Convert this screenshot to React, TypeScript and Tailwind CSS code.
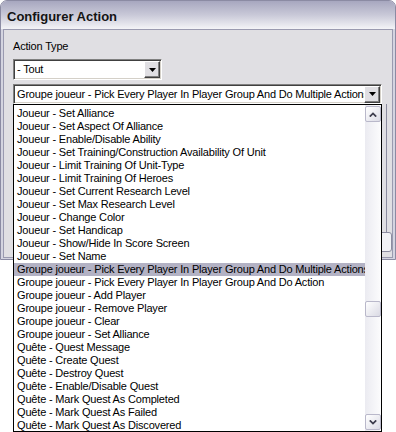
import React from "react";

const rows = [
  "Joueur - Set Alliance",
  "Joueur - Set Aspect Of Alliance",
  "Joueur - Enable/Disable Ability",
  "Joueur - Set Training/Construction Availability Of Unit",
  "Joueur - Limit Training Of Unit-Type",
  "Joueur - Limit Training Of Heroes",
  "Joueur - Set Current Research Level",
  "Joueur - Set Max Research Level",
  "Joueur - Change Color",
  "Joueur - Set Handicap",
  "Joueur - Show/Hide In Score Screen",
  "Joueur - Set Name",
  "Groupe joueur - Pick Every Player In Player Group And Do Multiple Actions",
  "Groupe joueur - Pick Every Player In Player Group And Do Action",
  "Groupe joueur - Add Player",
  "Groupe joueur - Remove Player",
  "Groupe joueur - Clear",
  "Groupe joueur - Set Alliance",
  "Quête - Quest Message",
  "Quête - Create Quest",
  "Quête - Destroy Quest",
  "Quête - Enable/Disable Quest",
  "Quête - Mark Quest As Completed",
  "Quête - Mark Quest As Failed",
  "Quête - Mark Quest As Discovered",
];

const SELECTED = 12;

function DropArrowButton() {
  return (
    <div className="w-[16px] h-[17px] shrink-0 flex items-center justify-center bg-[#e0dfe3] border border-t-white border-l-white border-r-[#404040] border-b-[#404040] shadow-[inset_-1px_-1px_0_#808080]">
      <svg width="7" height="4" viewBox="0 0 7 4">
        <polygon points="0,0 7,0 3.5,4" fill="#000" />
      </svg>
    </div>
  );
}

function Combo({ text, width, height }: { text: string; width: string; height: string }) {
  return (
    <div
      className={`${width} ${height} flex items-center bg-white border border-t-[#808080] border-l-[#808080] border-b-white border-r-white shadow-[inset_1px_1px_0_#404040,inset_-1px_-1px_0_#d4d0c8] pl-[3px] pr-[1px] py-[1px]`}
    >
      <div className="flex-1 overflow-hidden whitespace-nowrap text-[11px] leading-[13px] tracking-[-0.18px] text-black">
        {text}
      </div>
      <DropArrowButton />
    </div>
  );
}

function ScrollBtn({ up }: { up: boolean }) {
  return (
    <div className="w-[16px] h-[16px] shrink-0 rounded-[2px] border border-[#b9b8ca] bg-gradient-to-br from-white to-[#dcdce6] flex items-center justify-center">
      <svg width="8" height="5" viewBox="0 0 8 5">
        {up ? (
          <path d="M0.8 4.6 L4 1.4 L7.2 4.6" stroke="#3c3c4c" strokeWidth="1.8" fill="none" />
        ) : (
          <path d="M0.8 0.4 L4 3.6 L7.2 0.4" stroke="#3c3c4c" strokeWidth="1.8" fill="none" />
        )}
      </svg>
    </div>
  );
}

export default function App() {
  return (
    <div className="relative w-[396px] h-[432px] bg-white overflow-hidden font-['Liberation_Sans',Arial,sans-serif]">
      {/* Dialog window */}
      <div className="w-[396px] h-[260px] flex flex-col rounded-t-[7px] border border-[#8b8ba3] bg-[#d4d4e0]">
        <div className="h-[28px] shrink-0 rounded-t-[6px] bg-gradient-to-b from-[#a7a7bf] via-[#c9c9d8] to-[#f4f4f7] flex items-center pl-[6px] pt-[3px]">
          <span className="font-bold text-[13px] text-[#141414]">Configurer Action</span>
        </div>
        <div className="flex-1 mx-[2px] mb-[1px] border border-[#9a9ab0] bg-[#e0dfe3] flex flex-col pl-[9px]">
          <div className="mt-[10px] text-[11px] leading-[13px] tracking-[-0.18px] text-black">Action Type</div>
          <div className="mt-[6px]">
            <Combo text="- Tout" width="w-[149px]" height="h-[21px]" />
          </div>
          <div className="mt-[4px]">
            <Combo
              text="Groupe joueur - Pick Every Player In Player Group And Do Multiple Actions"
              width="w-[369px]"
              height="h-[20px]"
            />
          </div>
          {/* content hidden behind the dropdown list */}
          <div className="w-[374px] h-[128px] border-r border-[#8c8ca0]" />
          <div className="flex justify-end">
            <div className="w-[70px] h-[20px] rounded-[3px] border border-[#8c8ca0] bg-[#f2f2f6]" />
          </div>
        </div>
      </div>

      {/* Open dropdown list */}
      <div className="absolute left-[13px] top-[104px] w-[369px] h-[328px] border border-black bg-white flex">
        <div className="flex-1 overflow-hidden pt-[2px]">
          {rows.map((r, i) => (
            <div
              key={i}
              className={`h-[13px] pl-[3px] whitespace-nowrap text-[11px] leading-[13px] tracking-[-0.18px] text-black ${
                i === SELECTED ? "bg-[#b3b2c4]" : ""
              }`}
            >
              {r}
            </div>
          ))}
        </div>
        <div className="w-[16px] flex flex-col bg-gradient-to-r from-[#ebebf1] to-[#fcfcfd]">
          <div className="mt-[1px]">
            <ScrollBtn up />
          </div>
          <div className="mt-[179px] w-[16px] h-[16px] rounded-[2px] border border-[#b9b8ca] bg-gradient-to-br from-white to-[#dadae4]" />
          <div className="mt-auto mb-[1px]">
            <ScrollBtn up={false} />
          </div>
        </div>
      </div>
    </div>
  );
}
